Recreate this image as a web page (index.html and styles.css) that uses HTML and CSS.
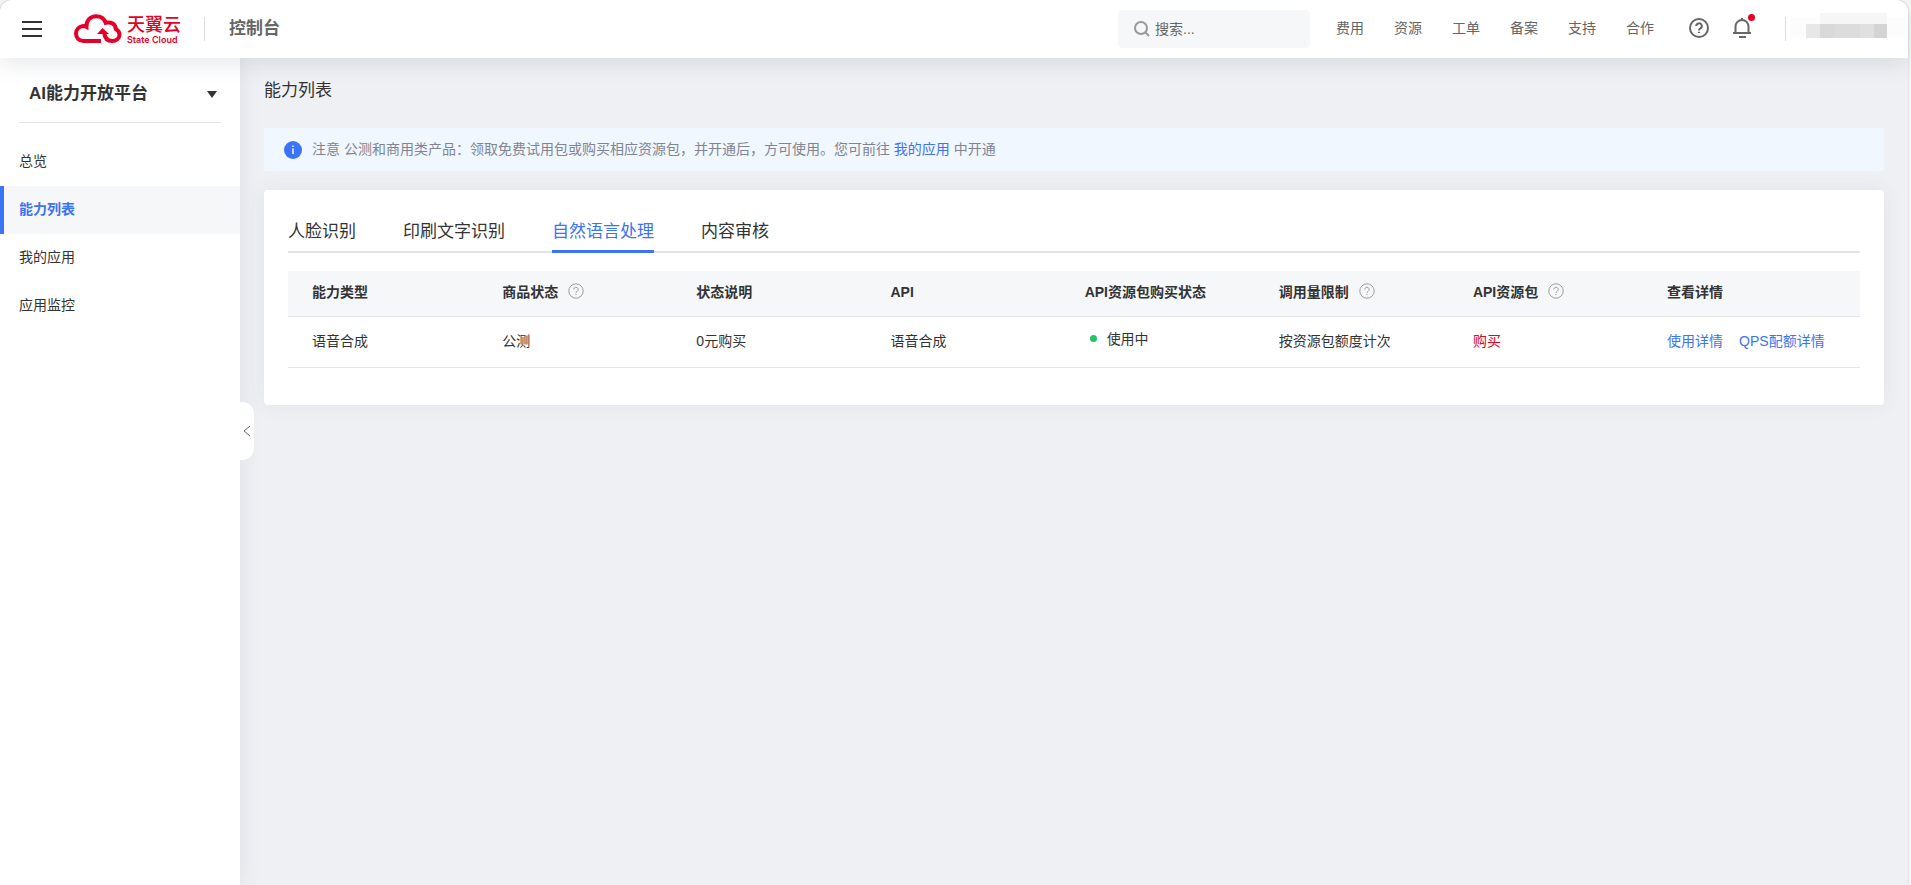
FILE: index.html
```
<!DOCTYPE html>
<html lang="zh-CN">
<head>
  <meta charset="UTF-8">
  <meta name="viewport" content="width=device-width, initial-scale=1.0">
  <title>能力列表 - AI能力开放平台</title>
  <link rel="stylesheet" href="styles.css">
</head>
<body>
  <svg class="sprite" aria-hidden="true">
    <symbol id="icon-help" viewBox="0 0 20 20">
      <circle cx="10" cy="10" r="9"/>
      <path d="M7.2 8.1a2.8 2.7 0 1 1 4.2 2.3c-.9.5-1.4 1-1.4 2"/>
      <path d="M10 13.7v1.4"/>
    </symbol>
  </svg>

  <div class="console">
    <!-- Header -->
    <header class="header">
      <button class="header__menu" type="button" aria-label="菜单">
        <svg width="20" height="16" viewBox="0 0 20 16"><path d="M0 1h20M0 8h20M0 15h20" stroke="#333" stroke-width="2"/></svg>
      </button>
      <a class="logo" href="#">
        <svg class="logo__mark" width="48" height="30" viewBox="0 0 48 30" fill="none">
          <path d="M27 27H9.500C5 27 2 23.600 2 19.500c0-4.200 3.300-7 7.200-7.500 1.200 0 2.300.2 3.200.7C12.200 6.500 16.500 2.200 22 2.200c4.800 0 8.300 2.500 9.700 6.600 5.300-1.400 9.800 1.400 10.100 6.200 2.400 1.400 3.700 3.300 3.700 5.600 0 3.900-3.300 6.400-7.300 6.400-4.200 0-7.500-2.500-8-8.500" stroke="#e60027" stroke-width="4"/>
          <path d="M23 20l5.500-6 6.500 6z" fill="#e60027"/>
        </svg>
        <span class="logo__text">
          <span class="logo__name">天翼云</span>
          <span class="logo__sub">State Cloud</span>
        </span>
      </a>
      <span class="header__divider"></span>
      <strong class="header__title">控制台</strong>

      <label class="search">
        <svg width="16" height="16" viewBox="0 0 16 16" fill="none" stroke="#999" stroke-width="2"><circle cx="7" cy="7" r="6"/><path d="m11 11 4 4"/></svg>
        <input class="search__input" type="text" placeholder="搜索..." aria-label="搜索">
      </label>
      <nav class="header__nav">
        <a href="#">费用</a>
        <a href="#">资源</a>
        <a href="#">工单</a>
        <a href="#">备案</a>
        <a href="#">支持</a>
        <a href="#">合作</a>
      </nav>
      <button class="header__icon" type="button" aria-label="帮助">
        <svg class="icon-help icon-help--large"><use href="#icon-help"/></svg>
      </button>
      <button class="header__icon header__icon--bell" type="button" aria-label="消息">
        <svg width="18" height="20" viewBox="0 0 18 20" fill="none" stroke="#666" stroke-width="2"><path d="M0 15h18M2.500 15V8.500a6.500 6.500 0 0 1 13 0V15M6 19h7M9 0v2"/></svg>
        <span class="header__dot"></span>
      </button>
      <span class="header__divider header__divider--user"></span>
      <!-- Masked user name -->
      <svg class="header__user" width="114" height="25" viewBox="0 0 114 25" shape-rendering="crispEdges">
        <path fill="#fcfcfc" d="M0 4h114v20H0z"/>
        <path fill="#f6f6f6" d="M29 0h67v11H29z"/>
        <path fill="#e7e7e7" d="M15 11h14v14H15z"/>
        <path fill="#d9d9d9" d="M29 11h14v14H29z"/>
        <path fill="#dcdcdc" d="M43 11h26v14H43z"/>
        <path fill="#e0e0e0" d="M69 11h14v14H69z"/>
        <path fill="#d4d4d4" d="M83 11h13v14H83z"/>
      </svg>
    </header>

    <div class="layout">
      <!-- Sidebar -->
      <aside class="sidebar">
        <button class="sidebar__product" type="button">
          AI能力开放平台
          <svg width="10" height="7" viewBox="0 0 10 7"><path d="M0 0h10L5 7z" fill="#333"/></svg>
        </button>
        <nav class="sidebar__nav">
          <a class="sidebar__link" href="#">总览</a>
          <a class="sidebar__link sidebar__link--active" href="#">能力列表</a>
          <a class="sidebar__link" href="#">我的应用</a>
          <a class="sidebar__link" href="#">应用监控</a>
        </nav>
        <button class="sidebar__toggle" type="button" aria-label="收起">
          <svg width="8" height="12" viewBox="0 0 8 12" fill="none" stroke="#666"><path d="M7 1 1 6l6 5"/></svg>
        </button>
      </aside>

      <!-- Content -->
      <main class="content">
        <h1 class="content__title">能力列表</h1>

        <div class="notice">
          <svg width="18" height="18" viewBox="0 0 18 18"><circle cx="9" cy="9" r="9" fill="#3d73f5"/><path d="M9 7.500V13M9 4.500v1.500" stroke="#fff" stroke-width="1.400"/></svg>
          <p class="notice__text">注意 公测和商用类产品：领取免费试用包或购买相应资源包，并开通后，方可使用。您可前往 <a href="#">我的应用</a> 中开通</p>
        </div>

        <section class="card">
          <div class="tabs" role="tablist">
            <button class="tabs__item" type="button" role="tab">人脸识别</button>
            <button class="tabs__item" type="button" role="tab">印刷文字识别</button>
            <button class="tabs__item tabs__item--active" type="button" role="tab" aria-selected="true">自然语言处理</button>
            <button class="tabs__item" type="button" role="tab">内容审核</button>
          </div>

          <table class="table">
            <thead>
              <tr>
                <th class="table__type">能力类型</th>
                <th>商品状态<svg class="icon-help"><use href="#icon-help"/></svg></th>
                <th>状态说明</th>
                <th>API</th>
                <th>API资源包购买状态</th>
                <th>调用量限制<svg class="icon-help"><use href="#icon-help"/></svg></th>
                <th>API资源包<svg class="icon-help"><use href="#icon-help"/></svg></th>
                <th class="table__detail">查看详情</th>
              </tr>
            </thead>
            <tbody>
              <tr>
                <td>语音合成</td>
                <td>公测</td>
                <td>0元购买</td>
                <td>语音合成</td>
                <td><span class="status">使用中</span></td>
                <td>按资源包额度计次</td>
                <td><a class="table__buy" href="#">购买</a></td>
                <td>
                  <div class="table__links">
                    <a href="#">使用详情</a>
                    <a href="#">QPS配额详情</a>
                  </div>
                </td>
              </tr>
            </tbody>
          </table>
        </section>
      </main>
    </div>
  </div>
</body>
</html>
```
FILE: styles.css
```
:root {
  --primary: #3d73f5;
  --danger: #e60027;
  --text: #333;
  --text-light: #666;
  --line: #e1e4ed;
  --bg: #eff0f4;
  --bg-light: #f6f7f9;
}
* { box-sizing: border-box; margin: 0; padding: 0; }
body {
  font-family: "Liberation Sans", "Noto Sans CJK SC", sans-serif;
  font-size: 14px;
  line-height: 20px;
  color: var(--text);
  background: #f8f8f8;
}
a { color: var(--primary); text-decoration: none; }
button {
  border: none;
  background: none;
  font: inherit;
  color: inherit;
  cursor: pointer;
}
svg { flex: none; }
.sprite { display: none; }
.console {
  display: flex;
  flex-direction: column;
  min-height: 100vh;
  margin-right: 3px;
  border-radius: 12px 12px 0 0;
  background: var(--bg);
  box-shadow: 0 0 2px rgba(0, 0, 0, 0.3);
}

/* Header */
.header {
  position: relative;
  z-index: 2;
  display: flex;
  align-items: center;
  height: 58px;
  padding: 0 3px 0 22px;
  border-radius: 12px 12px 0 0;
  background: #fff;
  box-shadow: 0 4px 24px rgba(55, 71, 90, 0.14);
}
.header__menu { display: flex; margin-right: 32px; }
.logo { display: flex; align-items: center; gap: 5px; color: var(--danger); }
.logo__text { display: flex; flex-direction: column; }
.logo__name { font-size: 18px; font-weight: 500; line-height: 20px; }
.logo__sub {
  font-family: Inter, sans-serif;
  font-size: 9px;
  font-weight: 600;
  line-height: 9px;
  white-space: nowrap;
}
.header__divider { width: 1px; height: 24px; margin: 0 24px 0 23px; background: #ddd; }
.header__divider--user { margin: 0 5px 0 34px; }
.header__title { font-size: 17px; color: var(--text-light); }
.header__user { margin-bottom: 7px; }
.search {
  display: flex;
  align-items: center;
  gap: 5px;
  width: 192px;
  height: 38px;
  margin-left: auto;
  padding: 0 16px;
  border-radius: 4px;
  background: var(--bg-light);
}
.search__input {
  width: 100%;
  border: none;
  outline: none;
  background: none;
  font: inherit;
}
.search__input::placeholder { color: var(--text-light); }
.header__nav { display: flex; gap: 30px; margin: 0 35px 0 26px; padding-bottom: 2px; }
.header__nav a { color: var(--text-light); }
.header__icon { position: relative; display: flex; margin-bottom: 2px; }
.header__icon--bell { margin-left: 24px; }
.header__dot {
  position: absolute;
  top: -4px;
  right: -4px;
  width: 7px;
  height: 7px;
  border-radius: 50%;
  background: var(--danger);
}

.icon-help {
  width: 16px;
  height: 16px;
  margin-left: 10px;
  vertical-align: -2px;
  fill: none;
  stroke: #888;
  stroke-width: 1;
}
.icon-help--large {
  width: 20px;
  height: 20px;
  margin: 0;
  stroke: var(--text-light);
  stroke-width: 2;
}

.layout { display: flex; flex: 1; }

/* Sidebar */
.sidebar {
  position: relative;
  flex: none;
  width: 240px;
  background: #fff;
  box-shadow: 0 0 20px rgba(55, 71, 90, 0.1);
}
.sidebar__product {
  display: flex;
  align-items: center;
  justify-content: space-between;
  width: 202px;
  height: 65px;
  margin: 0 19px 15px;
  padding: 8px 4px 0 10px;
  border-bottom: 1px solid var(--line);
  font-size: 17px;
  font-weight: bold;
}
.sidebar__link {
  display: block;
  padding: 0 19px 2px;
  line-height: 46px;
  color: var(--text);
}
.sidebar__link--active {
  padding-left: 15px;
  border-left: 4px solid var(--primary);
  background: var(--bg-light);
  font-weight: bold;
  color: var(--primary);
}
.sidebar__toggle {
  position: absolute;
  top: 344px;
  left: 100%;
  display: flex;
  align-items: center;
  justify-content: center;
  width: 14px;
  height: 58px;
  border-radius: 0 12px 12px 0;
  background: #fff;
}

/* Content */
.content { flex: 1; min-width: 0; padding: 21px 24px; }
.content__title {
  margin-bottom: 25px;
  font-size: 17px;
  font-weight: normal;
  line-height: 24px;
}
.notice {
  display: flex;
  align-items: center;
  gap: 10px;
  min-height: 43px;
  margin-bottom: 19px;
  padding: 0 20px;
  background: #f0f7ff;
  color: #808591;
}
.notice__text { padding-bottom: 2px; }
.card {
  padding: 24px 24px 37px;
  border-radius: 4px;
  background: #fff;
  box-shadow: 0 0 20px rgba(55, 71, 90, 0.08);
}

/* Tabs */
.tabs {
  display: flex;
  gap: 47px;
  margin-bottom: 18px;
  box-shadow: inset 0 -2px var(--line);
}
.tabs__item {
  height: 39px;
  border-bottom: 3px solid transparent;
  font-size: 17px;
}
.tabs__item--active { border-color: var(--primary); color: var(--primary); }

/* Table */
.table { width: 100%; border-collapse: collapse; table-layout: fixed; }
.table th,
.table td {
  padding: 0 0 2px 24px;
  border-bottom: 1px solid var(--line);
  text-align: left;
  white-space: nowrap;
}
.table th { height: 45px; background: var(--bg-light); }
.table td { height: 51px; }
.table__type { width: 12.1%; }
.table__detail { width: 13.8%; }
.table__buy { color: var(--danger); }
.table__links { display: flex; gap: 16px; }
.status { display: flex; align-items: center; gap: 10px; padding: 0 0 4px 5px; }
.status::before {
  content: "";
  width: 7px;
  height: 7px;
  border-radius: 50%;
  background: #1ec560;
}
```
